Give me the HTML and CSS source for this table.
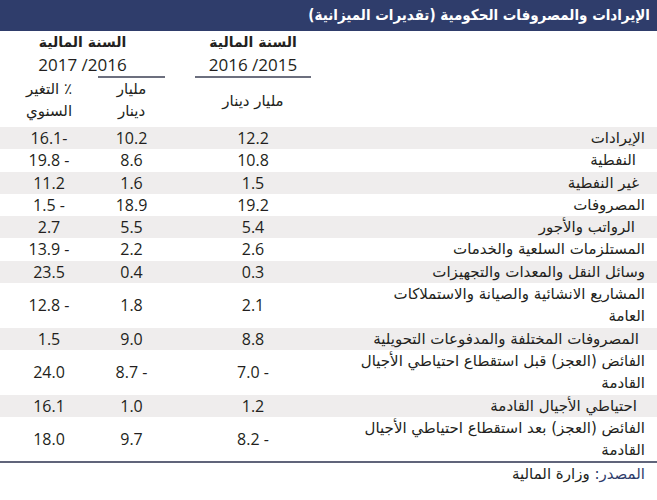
FILE: index.html
```html
<!DOCTYPE html>
<html lang="ar" dir="rtl">
<head>
<meta charset="utf-8">
<link rel="stylesheet" href="styles.css">
</head>
<body>
<div class="page">
  <header class="title-bar"><h1 class="title">الإيرادات والمصروفات الحكومية (تقديرات الميزانية)</h1></header>
  <div class="head-grid">
    <div class="h-year h-c1"><div class="h-fy">السنة المالية</div><div class="h-range"><bdi dir="ltr">2016 /2015</bdi></div></div>
    <div class="h-year h-c23"><div class="h-fy">السنة المالية</div><div class="h-range"><bdi dir="ltr">2017 /2016</bdi></div></div>
    <div class="h-rule h-c2"></div>
    <div class="h-unit h-c1 h-unit-mid">مليار دينار</div>
    <div class="h-unit h-c2">مليار<br>دينار</div>
    <div class="h-unit h-c3">٪ التغير<br>السنوي</div>
  </div>
  <div class="table">
    <div class="row shaded"><div class="label">الإيرادات</div><div class="num c1">12.2</div><div class="num c2">10.2</div><div class="num c3">-16.1</div></div>
    <div class="row"><div class="label ind-9">النفطية</div><div class="num c1">10.8</div><div class="num c2">8.6</div><div class="num c3">- 19.8</div></div>
    <div class="row shaded"><div class="label ind-6">غير النفطية</div><div class="num c1">1.5</div><div class="num c2">1.6</div><div class="num c3">11.2</div></div>
    <div class="row"><div class="label">المصروفات</div><div class="num c1">19.2</div><div class="num c2">18.9</div><div class="num c3">- 1.5</div></div>
    <div class="row shaded"><div class="label ind-10">الرواتب والأجور</div><div class="num c1">5.4</div><div class="num c2">5.5</div><div class="num c3">2.7</div></div>
    <div class="row"><div class="label">المستلزمات السلعية والخدمات</div><div class="num c1">2.6</div><div class="num c2">2.2</div><div class="num c3">- 13.9</div></div>
    <div class="row shaded"><div class="label">وسائل النقل والمعدات والتجهيزات</div><div class="num c1">0.3</div><div class="num c2">0.4</div><div class="num c3">23.5</div></div>
    <div class="row"><div class="label">المشاريع الانشائية والصيانة والاستملاكات<br>العامة</div><div class="num c1">2.1</div><div class="num c2">1.8</div><div class="num c3">- 12.8</div></div>
    <div class="row shaded"><div class="label ind-6">المصروفات المختلفة والمدفوعات التحويلية</div><div class="num c1">8.8</div><div class="num c2">9.0</div><div class="num c3">1.5</div></div>
    <div class="row"><div class="label">الفائض (العجز) قبل استقطاع احتياطي الأجيال<br>القادمة</div><div class="num c1">- 7.0</div><div class="num c2">- 8.7</div><div class="num c3">24.0</div></div>
    <div class="row shaded"><div class="label ind-8">احتياطي الأجيال القادمة</div><div class="num c1">1.2</div><div class="num c2">1.0</div><div class="num c3">16.1</div></div>
    <div class="row last"><div class="label">الفائض (العجز) بعد استقطاع احتياطي الأجيال<br>القادمة</div><div class="num c1">- 8.2</div><div class="num c2">9.7</div><div class="num c3">18.0</div></div>
  </div>
  <div class="source"><span class="src-key">المصدر:</span> وزارة المالية</div>
</div>
</body>
</html>
```

FILE: styles.css
```css
* { box-sizing: border-box; margin: 0; padding: 0; }
html, body { background: #ffffff; }
body {
  margin: 0;
  width: 657px;
  height: 500px;
  overflow: hidden;
  font-family: "DejaVu Sans", sans-serif;
  color: #231f20;
}
.page { width: 657px; }
.title-bar {
  height: 31px;
  background: #2f3d6b;
  display: flex;
  align-items: center;
  padding-right: 7px;
}
.title {
  color: #ffffff;
  font-family: "DejaVu Sans Condensed", "DejaVu Sans", sans-serif;
  font-size: 15px;
  font-weight: bold;
  line-height: 1;
}
.head-grid {
  display: grid;
  grid-template-columns: 346px 116px 30px 67px 98px;
  grid-template-rows: 47px 49px;
}
.h-c1 { grid-column: 2; }
.h-c2 { grid-column: 4; }
.h-c3 { grid-column: 5; }
.h-c23 { grid-column: 4 / 6; }
.h-year { grid-row: 1; text-align: center; }
.h-c1.h-year { border-bottom: 2px solid #6c6f7e; }
.h-fy {
  font-weight: bold;
  font-size: 14px;
  line-height: 23px;
}
.h-range {
  font-family: "Open Sans", sans-serif;
  font-size: 17px;
  line-height: 22px;
}
.h-rule {
  grid-row: 1;
  align-self: end;
  height: 2px;
  background: #6c6f7e;
}
.h-unit {
  grid-row: 2;
  text-align: center;
  font-size: 15px;
  line-height: 22px;
}
.h-unit-mid { align-self: center; padding-bottom: 4px; }
.row {
  display: grid;
  grid-template-columns: 346px 116px 30px 67px 98px;
  align-items: center;
  min-height: 22.3px;
}
.row.shaded { background: #efeded; }
.row.last { border-bottom: 2px solid #60647a; }
.label {
  grid-column: 1;
  font-size: 15px;
  line-height: 22.3px;
  padding-right: 12px;
  white-space: nowrap;
}
.ind-6 { padding-right: 18px; }
.ind-8 { padding-right: 20px; }
.ind-9 { padding-right: 21px; }
.ind-10 { padding-right: 22px; }
.num {
  font-family: "Open Sans", sans-serif;
  font-size: 16px;
  line-height: 22.3px;
  text-align: center;
}
.c1 { grid-column: 2; }
.c2 { grid-column: 4; }
.c3 { grid-column: 5; }
.source {
  padding-right: 12px;
  font-size: 15px;
  line-height: 22px;
}
.src-key { color: #2f3d6b; }
```
